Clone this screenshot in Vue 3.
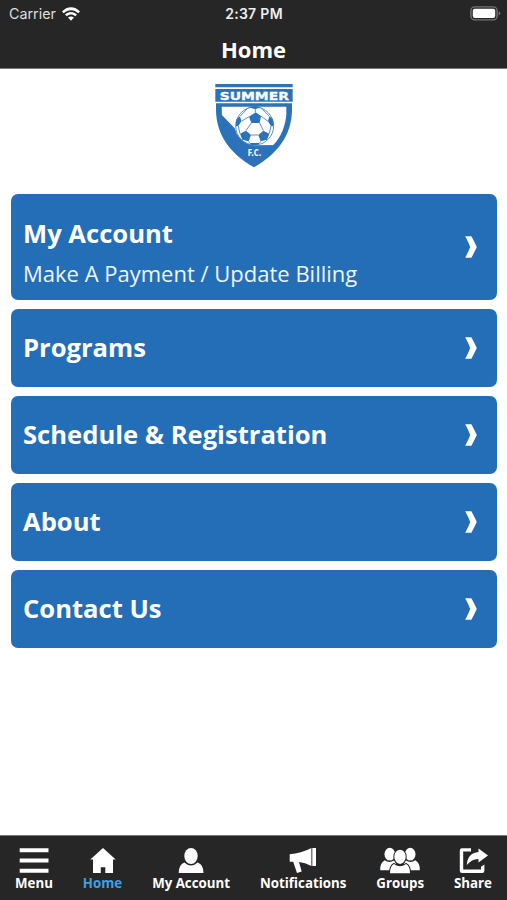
<script setup>
const cards = [
  { title: 'My Account', sub: 'Make A Payment / Update Billing' },
  { title: 'Programs' },
  { title: 'Schedule & Registration' },
  { title: 'About' },
  { title: 'Contact Us' },
]
const tabs = [
  { id: 'menu', label: 'Menu' },
  { id: 'home', label: 'Home', active: true },
  { id: 'account', label: 'My Account' },
  { id: 'notifications', label: 'Notifications' },
  { id: 'groups', label: 'Groups' },
  { id: 'share', label: 'Share' },
]
</script>

<template>
  <div class="app">
    <header class="header">
      <div class="status">
        <div class="carrier">
          <span>Carrier</span>
          <svg class="wifi" viewBox="0 0 18 14">
            <path d="M0 4.5C5-1.2 13-1.2 18 4.5L16.2 6.3C12.2 2.2 5.8 2.2 1.8 6.3Z" />
            <path d="M3 7.5C6.4 4 11.6 4 15 7.5L13.2 9.3C10.8 7 7.2 7 4.8 9.3Z" />
            <path d="M6 10.6C7.7 9 10.3 9 12 10.6L9 13.7Z" />
          </svg>
        </div>
        <span class="time">2:37 PM</span>
        <svg class="battery" viewBox="0 0 31 15">
          <rect x="0.9" y="0.9" width="26.2" height="13" rx="4" fill="none" stroke="#747474" stroke-width="1.4" />
          <rect x="2.8" y="2.8" width="22.4" height="9.2" rx="2" fill="#fff" />
          <path d="M28.6 5.2Q32 7.4 28.6 9.6Z" fill="#747474" />
        </svg>
      </div>
      <h1 class="heading">Home</h1>
    </header>

    <main class="content">
      <svg class="logo" viewBox="0 0 300 300">
        <path d="M34 27H266V37H34ZM34 42H266V80H34ZM36 85H264V108C262 180 222 236 150 277C78 236 38 180 36 108Z" fill="#2b72ba" />
        <path d="M53 95H247V116C245 152 231 186 207 211H150C126 202 111 193 91 171Q67 149 54 122Z" fill="#fff" />
        <path d="M53 119L92 160Q100 196 142 213L206 211Q184 235 150 254C92 222 58 180 53 119Z" fill="#2b72ba" />
        <circle cx="152" cy="153" r="57" fill="#fff" stroke="#5c91c7" stroke-width="3" />
        <g fill="#2b72ba">
          <path d="M155 112L171 123L167 144H142L135 125Z" />
          <path d="M134 97Q152 91 170 97L154 103Z" />
          <path d="M98 132L108 124L112 139L103 153L96 154Q94 142 98 132Z" />
          <path d="M206 132L196 124L192 139L201 153L208 154Q210 142 206 132Z" />
          <path d="M108 176L126 167L141 180L134 199L115 194Z" />
          <path d="M196 176L178 167L163 180L170 199L189 194Z" />
          <path d="M137 204H167L163 209Q152 211 141 209Z" />
        </g>
        <path d="M154 103V112M112 139L135 125M171 123L192 139M142 144L126 167M167 144L178 167M103 153L108 176M201 153L196 176M141 180H163M134 199L137 204M170 199L167 204M108 124L134 97M196 124L170 97" fill="none" stroke="#5c91c7" stroke-width="3" />
        <text class="logo-name" x="47" y="74" textLength="208" lengthAdjust="spacingAndGlyphs">SUMMER</text>
        <text class="logo-fc" x="131" y="242" textLength="41" lengthAdjust="spacingAndGlyphs">F.C.</text>
      </svg>

      <nav class="cards">
        <a v-for="card in cards" :key="card.title" class="card" :class="{ tall: card.sub }">
          <div class="copy">
            <div class="title">{{ card.title }}</div>
            <div v-if="card.sub" class="sub">{{ card.sub }}</div>
          </div>
          <svg class="chevron" viewBox="0 0 12 22">
            <path d="M0.2 0.3H6.4Q9 5 11.8 11Q9 17 6.4 21.7H0.2Q3.4 16 5.2 11Q3.4 6 0.2 0.3Z" />
          </svg>
        </a>
      </nav>
    </main>

    <footer class="tabs">
      <a v-for="tab in tabs" :key="tab.id" class="tab" :class="{ active: tab.active }">
        <svg class="icon" viewBox="0 0 44 28">
          <path v-if="tab.id === 'menu'" d="M7.7 2.2H36.5V6.2H7.7ZM7.7 12.4H36.5V16.4H7.7ZM7.7 22.8H36.5V26.8H7.7Z" />
          <path v-else-if="tab.id === 'home'" d="M22 2L34.7 13.5H32V27H24.3V21.2H19.8V27H12V13.5H9.3Z" />
          <template v-else-if="tab.id === 'account'">
            <ellipse cx="22" cy="10" rx="6.7" ry="8" />
            <path d="M15.3 16.5Q22 22.5 28.7 16.5Q34.5 18.5 34.5 27H9.7Q9.7 18.5 15.3 16.5Z" />
          </template>
          <template v-else-if="tab.id === 'notifications'">
            <path d="M8.7 8.3Q20 7.7 30.4 2.1V20Q24 16.6 18 16L20.7 25.5L16 27L12.2 15.8H8.7Z" />
            <path d="M31.3 2H35V20H31.3Z" />
          </template>
          <template v-else-if="tab.id === 'groups'">
            <ellipse cx="11.8" cy="8.2" rx="5.3" ry="6.4" />
            <ellipse cx="32.2" cy="8.2" rx="5.3" ry="6.4" />
            <path d="M6.6 14.2Q11.5 17.6 16.4 14.2L18 17.5V24.2H2.2Q1.8 17 6.6 14.2ZM37.4 14.2Q32.5 17.6 27.6 14.2L26 17.5V24.2H41.8Q42.2 17 37.4 14.2Z" />
            <path class="outlined" d="M16 18Q22 22.4 28 18Q32 20 32 27.2H12Q12 20 16 18Z" />
            <ellipse cx="22" cy="10.8" rx="5.7" ry="7.1" class="outlined" />
          </template>
          <template v-else>
            <path d="M20 2.2H11Q8.8 2.2 8.8 4.4V24.7Q8.8 26.9 11 26.9H31.2Q33.4 26.9 33.4 24.7V18.5L30 20.8V23.5H12.2V5.6H20Z" />
            <path d="M27.5 2.5L37 9.5L27.5 16.4V13Q21 12.8 15.8 19Q16.5 7 27.5 6Z" />
          </template>
        </svg>
        <span class="label">{{ tab.label }}</span>
      </a>
    </footer>
  </div>
</template>

<style>
body {
  margin: 0;
  background: #fff;
}
</style>

<style scoped>
.app {
  display: flex;
  flex-direction: column;
  height: 900px;
  font-family: 'Open Sans', sans-serif;
  background: #fff;
}
.header {
  height: 69px;
  box-sizing: border-box;
  background: #262626;
  border-bottom: 1px solid #777;
  color: #fff;
}
.status {
  display: grid;
  grid-template-columns: 1fr auto 1fr;
  align-items: center;
  height: 27px;
  padding: 0 6px 0 9px;
  font-family: Inter, sans-serif;
}
.carrier {
  display: flex;
  align-items: center;
  gap: 6px;
  font-size: 14.3px;
  color: #dedede;
}
.wifi {
  width: 18px;
  height: 14px;
  fill: #fff;
}
.time {
  margin-left: -2px;
  font-size: 14px;
  font-weight: 600;
  letter-spacing: 0.3px;
  color: #eee;
}
.battery {
  width: 31px;
  height: 15px;
  justify-self: end;
}
.heading {
  margin: 0;
  font-size: 22px;
  font-weight: 700;
  line-height: 30px;
  padding-top: 7px;
  text-align: center;
}
.content {
  flex: 1;
  display: flex;
  flex-direction: column;
  align-items: center;
  padding: 6px 10.5px 0 11px;
}
.logo {
  width: 100px;
  height: 100px;
}
.logo-name {
  font-family: 'DejaVu Sans', sans-serif;
  font-weight: 700;
  font-size: 34px;
  fill: #fff;
  stroke: #fff;
  stroke-width: 1px;
}
.logo-fc {
  font-family: 'DejaVu Sans', sans-serif;
  font-weight: 700;
  font-size: 24px;
  fill: #fff;
}
.cards {
  align-self: stretch;
  display: flex;
  flex-direction: column;
  gap: 8.8px;
  margin-top: 19.4px;
}
.card {
  display: flex;
  align-items: center;
  justify-content: space-between;
  height: 78px;
  box-sizing: border-box;
  padding: 0 20px 0 12px;
  border-radius: 7px;
  background: #246eb8;
  color: #fff;
}
.card.tall {
  height: 106px;
}
.title {
  font-size: 25.6px;
  font-weight: 700;
  line-height: 36px;
}
.sub {
  font-size: 22px;
  line-height: 30px;
  margin-top: 6px;
  color: #edf6ff;
}
.tall .copy {
  padding-top: 10px;
}
.chevron {
  width: 12px;
  height: 22px;
  fill: #fff;
}
.tabs {
  display: flex;
  justify-content: space-between;
  height: 65px;
  box-sizing: border-box;
  padding: 10px 15px 0;
  background: #262626;
  border-top: 1px solid #777;
  color: #fff;
}
.tab {
  display: flex;
  flex-direction: column;
  align-items: center;
}
.icon {
  width: 44px;
  height: 28px;
  margin: 0 -4px;
  fill: #fff;
}
.outlined {
  stroke: #262626;
  stroke-width: 2px;
  paint-order: stroke;
}
.label {
  font-size: 13.3px;
  font-weight: 700;
  line-height: 18px;
}
.active .label {
  color: #3fa0e6;
}
</style>
